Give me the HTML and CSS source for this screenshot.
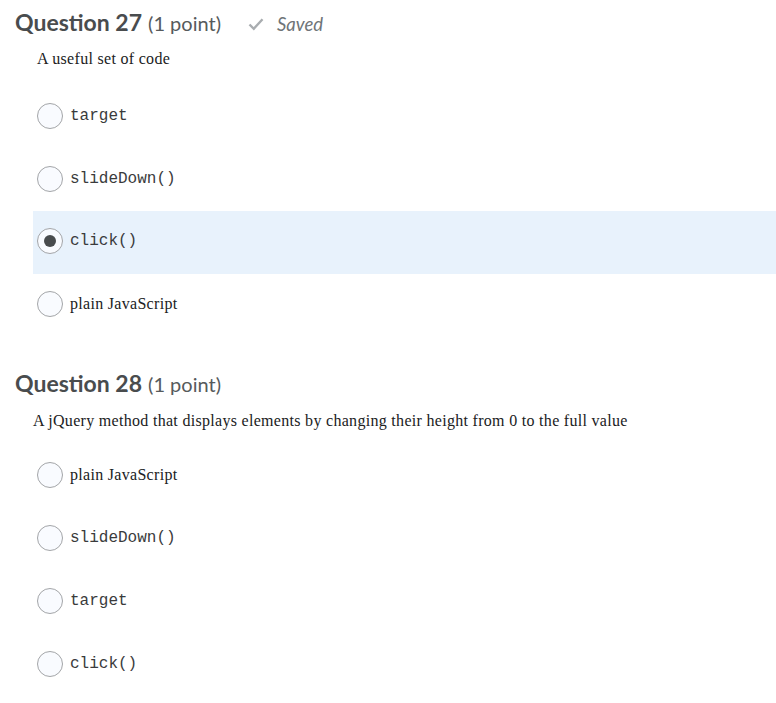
FILE: index.html
```html
<!DOCTYPE html>
<html lang="en">
<head>
  <meta charset="UTF-8" />
  <meta name="viewport" content="width=device-width, initial-scale=1" />
  <title>Quiz</title>
  <link rel="stylesheet" href="styles.css">
</head>
<body>
  <section class="question q-first">
    <h2 class="q-title">
      Question 27 <span class="q-points">(1 point)</span>
      <span class="saved">
        <svg width="16" height="14" viewBox="0 0 16 14"><path d="M1.5 7.5 L5.8 11.8 L14.5 2.2" fill="none" stroke="#a9adb0" stroke-width="2.4"/></svg>
        Saved
      </span>
    </h2>
    <p class="q-text indent">A useful set of code</p>
    <div class="options">
      <label class="option"><span class="radio"></span><code>target</code></label>
      <label class="option"><span class="radio"></span><code>slideDown()</code></label>
      <label class="option selected"><span class="radio checked"></span><code>click()</code></label>
      <label class="option"><span class="radio"></span><span>plain JavaScript</span></label>
    </div>
  </section>

  <section class="question q-second">
    <h2 class="q-title">Question 28 <span class="q-points">(1 point)</span></h2>
    <p class="q-text">A jQuery method that displays elements by changing their height from 0 to the full value</p>
    <div class="options">
      <label class="option"><span class="radio"></span><span>plain JavaScript</span></label>
      <label class="option"><span class="radio"></span><code>slideDown()</code></label>
      <label class="option"><span class="radio"></span><code>target</code></label>
      <label class="option"><span class="radio"></span><code>click()</code></label>
    </div>
  </section>
</body>
</html>
```

FILE: styles.css
```css
body {
  margin: 0;
  background: #fff;
  color: #202122;
  font-family: 'Liberation Serif', serif;
}
.question {
  padding-left: 15px;
}
.q-first {
  padding-top: 8px;
}
.q-second {
  margin-top: 33px;
}
.q-title {
  margin: 0;
  font-family: Lato, sans-serif;
  font-size: 23px;
  line-height: 28px;
  font-weight: 700;
  color: #494c4e;
  display: flex;
  align-items: baseline;
}
.q-points {
  font-weight: 400;
  font-size: 20px;
  margin-left: 6px;
  color: #565a5c;
}
.saved {
  margin-left: 27px;
  font-size: 18.5px;
  font-weight: 400;
  font-style: italic;
  color: #6e7477;
  display: inline-flex;
  align-items: baseline;
  gap: 13px;
}
.q-text {
  font-size: 16px;
  line-height: 20px;
  letter-spacing: 0.3px;
  margin: 11px 0 17px 18px;
}
.q-second .q-text {
  margin: 13px 0 14px 18px;
}
.q-text.indent {
  padding-left: 4px;
}
.options {
  margin-left: 18px;
}
.option {
  display: flex;
  align-items: flex-start;
  height: 62.5px;
  padding: 17px 0 0 4px;
  box-sizing: border-box;
  font-size: 16px;
  letter-spacing: 0.3px;
}
.q-second .option {
  height: 63px;
}
.option.selected {
  background: #e8f2fc;
}
.option code {
  font-family: 'Liberation Mono', monospace;
  font-size: 16px;
  letter-spacing: 0;
  color: #3a3b3c;
}
.option > :last-child {
  line-height: 26px;
  margin-left: 7px;
}
.radio {
  width: 26px;
  height: 26px;
  box-sizing: border-box;
  border: 1.5px solid #a3a5a8;
  border-radius: 50%;
  background: #f9fbff;
  display: flex;
  align-items: center;
  justify-content: center;
  flex: none;
}
.radio.checked::after {
  content: "";
  width: 12px;
  height: 12px;
  border-radius: 50%;
  background: #494c4e;
}
```
